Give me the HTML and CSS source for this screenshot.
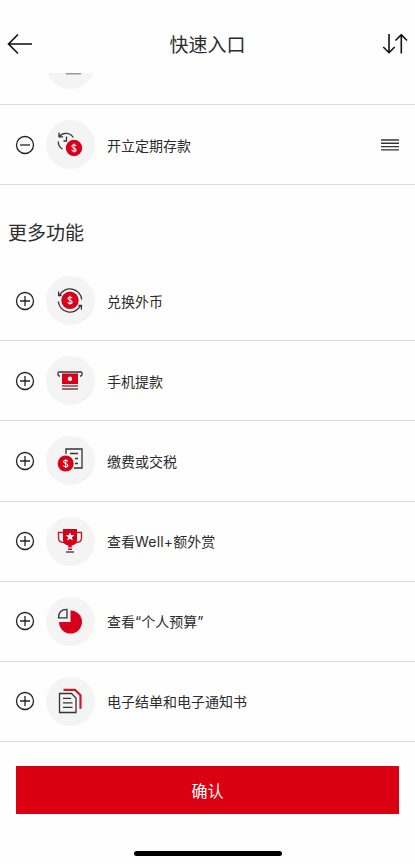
FILE: index.html
```html
<!DOCTYPE html>
<html lang="zh-CN">
<head>
<meta charset="utf-8">
<meta name="viewport" content="width=device-width, initial-scale=1">
<title>快速入口</title>
<link rel="stylesheet" href="styles.css">
</head>
<body>
<svg width="0" height="0" class="defs" aria-hidden="true">
  <symbol id="plus" viewBox="0 0 20 20"><circle cx="10" cy="10" r="8.5"/><path d="M5 10h10M10 5v10"/></symbol>
  <symbol id="minus" viewBox="0 0 20 20"><circle cx="10" cy="10" r="8.5"/><path d="M5 10h10"/></symbol>
  <symbol id="dollar" viewBox="0 0 8 12"><path d="M6.4 3.8C6.2 2.7 5.3 2.2 4 2.2S1.6 2.8 1.6 4c0 2.6 4.9 1.2 4.9 4 0 1.200-1.100 1.900-2.500 1.900S1.600 9.300 1.500 8M4 .8v10.400"/></symbol>
</svg>
<div class="screen">
  <header class="header">
    <svg class="back" viewBox="0 0 26 22"><path d="M25 10H2M11 .5 1.500 10l9.500 9.500"/></svg>
    <h1>快速入口</h1>
    <svg class="sort" viewBox="0 0 26 22"><path d="M7 0v19M1.300 13 7 18.700l5.700-5.700M19.300 19.500V.5M13.500 6.500l5.800-5.800 5.700 5.800"/></svg>
  </header>
  <main>
    <div class="peek">
      <div class="row">
        <span class="toggle"></span>
        <span class="disc"><svg viewBox="0 0 48 48"><path class="grey" d="M20 33.300h15"/></svg></span>
      </div>
    </div>
    <div class="row">
      <svg class="toggle"><use href="#minus"/></svg>
      <span class="disc"><svg viewBox="0 0 48 48">
        <path class="line" d="M12.300 21.500a8.300 8.300 0 0 0 4.200 7.500M13.300 16.500a8.500 8.500 0 0 1 14 1M13 12.500v4.300h4.200M20.500 16.500v4.500h-3"/>
        <circle class="red" cx="28" cy="28" r="8.200"/>
        <use class="dollar" href="#dollar" x="24.500" y="22.500" width="7" height="11"/>
      </svg></span>
      <span class="label">开立定期存款</span>
      <svg class="grip" viewBox="0 0 18 12"><path d="M0 1h18M0 4.300h18M0 7.600h18M0 10.900h18"/></svg>
    </div>
    <h2>更多功能</h2>
    <div class="row">
      <svg class="toggle"><use href="#plus"/></svg>
      <span class="disc"><svg viewBox="0 0 48 48">
        <path class="line" d="M13.500 19.500a11.700 11.700 0 0 1 22.200 4M34.500 29.500a11.700 11.700 0 0 1-22.200-4M12.600 15.500v4h3M35.400 33.500v-4h-3"/>
        <circle class="red" cx="24" cy="24.300" r="8.700"/>
        <use class="dollar" href="#dollar" x="20.500" y="18.800" width="7" height="11"/>
      </svg></span>
      <span class="label">兑换外币</span>
    </div>
    <div class="row">
      <svg class="toggle"><use href="#plus"/></svg>
      <span class="disc"><svg viewBox="0 0 48 48">
        <path class="line" d="M14 20h-1a1.500 1.500 0 0 1-1-1.500v-1.200q0-1.300 1.300-1.300h21.400q1.300 0 1.300 1.300v1.200a1.500 1.500 0 0 1-1 1.500h-1"/>
        <path class="red" d="M16 17.500h16v10.500H16z"/><circle class="white" cx="24" cy="22.700" r="2.200"/>
        <path class="redline" d="M16 30h16"/><path class="line" d="M16 33h16"/>
      </svg></span>
      <span class="label">手机提款</span>
    </div>
    <div class="row">
      <svg class="toggle"><use href="#plus"/></svg>
      <span class="disc"><svg viewBox="0 0 48 48">
        <path class="line" d="M20 18v-5h16v19h-8M24 17.500h8M29 22.500h3M29 27.500h3"/>
        <circle class="red" cx="19.700" cy="27.500" r="8"/>
        <use class="dollar" href="#dollar" x="16.200" y="22" width="7" height="11"/>
      </svg></span>
      <span class="label">缴费或交税</span>
    </div>
    <div class="row">
      <svg class="toggle"><use href="#plus"/></svg>
      <span class="disc"><svg viewBox="0 0 48 48">
        <path class="redline" d="M17 15.500h-4.500v5.500q0 4.500 5.500 4.500M31 15.500h4.500v5.500q0 4.500-5.500 4.500"/>
        <path class="red" d="M17 12h14v11q0 4.500-5.300 5.500v2h-3.400v-2Q17 27.500 17 23zM22 31.500h4v1.500h-4z"/>
        <path class="white" d="m24 15.200 1.200 2.900 3.100.200-2.400 2 .8 3.100-2.700-1.700-2.700 1.700.8-3.100-2.400-2 3.100-.2z"/>
        <path class="line" d="M20 35h8"/>
      </svg></span>
      <span class="label">查看<span class="latin">Well+</span>额外赏</span>
    </div>
    <div class="row">
      <svg class="toggle"><use href="#plus"/></svg>
      <span class="disc"><svg viewBox="0 0 48 48">
        <path class="line" d="M21 20.800h-8.500q0-8.500 8.500-8.500z"/>
        <path class="red" d="M24.500 13.500A11.500 11.500 0 1 1 13 25h11.500z"/>
      </svg></span>
      <span class="label">查看“个人预算”</span>
    </div>
    <div class="row">
      <svg class="toggle"><use href="#plus"/></svg>
      <span class="disc"><svg viewBox="0 0 48 48">
        <path class="redthick" d="M17.500 12.800h11.500l5.500 5.500v13.500"/>
        <path class="line" d="M13.500 16.500h12l4.500 4.500v14.500H13.500zM17 21.300h8M17 25.800h9.500M17 30.300h9.500"/>
      </svg></span>
      <span class="label">电子结单和电子通知书</span>
    </div>
  </main>
  <footer>
    <button type="button">确认</button>
    <div class="home"></div>
  </footer>
</div>
</body>
</html>
```

FILE: styles.css
```css
* { box-sizing: border-box; }

body {
  margin: 0;
  background: #fff;
  color: #2c2c2c;
  font-family: Inter, "Noto Sans CJK SC", sans-serif;
}

svg { display: block; fill: none; }
.defs { display: none; }

.screen {
  height: 864px;
  overflow: hidden;
  display: flex;
  flex-direction: column;
  background: #fefefe;
}

.header {
  height: 73px;
  flex: none;
  padding: 17px 7px 0;
  display: flex;
  align-items: center;
  justify-content: space-between;
}

.header h1 { margin: 0; padding-top: 1px; font-size: 19px; font-weight: 400; line-height: 28px; }
.back, .sort { width: 26px; height: 22px; stroke: #111; stroke-width: 1.6; }

.peek {
  height: 32px;
  overflow: hidden;
  display: flex;
  flex-direction: column;
  justify-content: flex-end;
}

.row {
  height: 80.15px;
  flex: none;
  padding: 0 16px 0 15px;
  display: flex;
  align-items: center;
  border-bottom: 1px solid #dcdcdc;
}

.toggle { width: 20px; height: 20px; flex: none; stroke: #222; stroke-width: 1.3; }

.disc {
  width: 49px;
  height: 49px;
  margin: 0 12px 0 11px;
  flex: none;
  border-radius: 50%;
  background: #f4f4f4;
}

.disc svg { width: 48px; height: 48px; }
.line { stroke: #333; stroke-width: 1.3; }
.grey { stroke: #999; stroke-width: 2.4; }
.red { fill: #d7001b; }
.white { fill: #fff; }
.redline { stroke: #c81a2c; stroke-width: 1.4; }
.redthick { stroke: #c81a2c; stroke-width: 2.2; }
.dollar { stroke: #fff; stroke-width: 1.2; }

.label { flex: 1; font-size: 14px; line-height: 20px; padding-top: 2px; }
.latin { letter-spacing: 0.2px; }
.grip { width: 18px; height: 12px; stroke: #333; stroke-width: 1.4; }

h2 {
  height: 76px;
  margin: 0;
  padding: 35px 8px 0;
  font-size: 19px;
  font-weight: 400;
  line-height: 28px;
}

footer { padding: 24px 16px 0; }

button {
  display: block;
  width: 100%;
  height: 48px;
  border: 0;
  background: #db0011;
  color: #fff;
  font: 400 16px/48px "Noto Sans CJK SC", sans-serif;
  padding: 0;
}

.home {
  width: 148px;
  height: 5px;
  margin: 37px auto 0;
  border-radius: 3px;
  background: #000;
}
```
